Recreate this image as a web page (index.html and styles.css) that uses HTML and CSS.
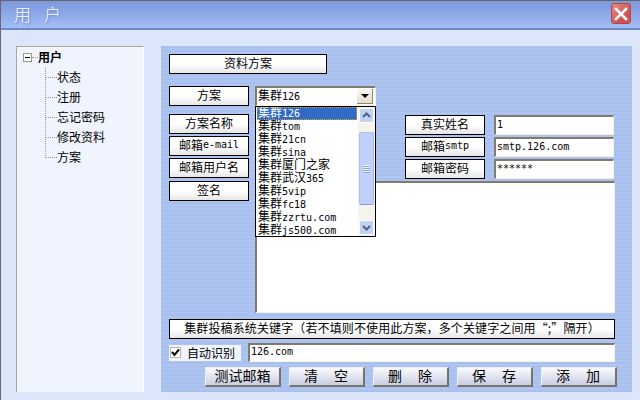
FILE: index.html
```html
<!DOCTYPE html>
<html lang="zh-CN">
<head>
<meta charset="utf-8">
<title>用户</title>
<link rel="stylesheet" href="styles.css">
</head>
<body>
<div class="window">
  <header class="titlebar">
    <h1 class="title">用户</h1>
    <button class="close" aria-label="关闭">
      <svg width="14" height="14" viewBox="0 0 14 14"><path d="M2 2 L12 12 M12 2 L2 12" stroke="#fff" stroke-width="2.6" stroke-linecap="square" fill="none"/></svg>
    </button>
  </header>
  <div class="client">
    <nav class="tree">
      <div class="root"><span class="toggle"></span><span class="tick-root"></span><b>用户</b></div>
      <ul class="branch">
        <li><span class="tick"></span>状态</li>
        <li><span class="tick"></span>注册</li>
        <li><span class="tick"></span>忘记密码</li>
        <li><span class="tick"></span>修改资料</li>
        <li><span class="tick"></span>方案</li>
      </ul>
    </nav>
    <main class="panel">
      <div class="btn btn-head">资料方案</div>
      <div class="form">
        <div class="labels">
          <div class="btn btn-label">方案</div>
          <div class="btn btn-label gap-first">方案名称</div>
          <div class="btn btn-label">邮箱<span class="en">e-mail</span></div>
          <div class="btn btn-label">邮箱用户名</div>
          <div class="btn btn-label gap-last">签名</div>
        </div>
        <div class="fields">
          <div class="select"><span class="select-text">集群<span class="en">126</span></span><span class="select-arrow"></span></div>
          <div class="list">
            <div class="items">
              <div class="item selected">集群<span class="en">126</span></div>
              <div class="item">集群<span class="en">tom</span></div>
              <div class="item">集群<span class="en">21cn</span></div>
              <div class="item">集群<span class="en">sina</span></div>
              <div class="item">集群厦门之家</div>
              <div class="item">集群武汉<span class="en">365</span></div>
              <div class="item">集群<span class="en">5vip</span></div>
              <div class="item">集群<span class="en">fc18</span></div>
              <div class="item">集群<span class="en">zzrtu.com</span></div>
              <div class="item">集群<span class="en">js500.com</span></div>
            </div>
            <div class="scrollbar">
              <span class="sb-btn"><svg width="13" height="13" viewBox="0 0 13 13"><path d="M3 8 L6.5 4.5 L10 8" stroke="#4d6185" stroke-width="2" fill="none"/></svg></span>
              <span class="sb-thumb"><span class="grip"></span></span>
              <span class="sb-btn"><svg width="13" height="13" viewBox="0 0 13 13"><path d="M3 5 L6.5 8.5 L10 5" stroke="#4d6185" stroke-width="2" fill="none"/></svg></span>
            </div>
          </div>
          <div class="right-group">
            <div class="pair"><div class="btn btn-label">真实姓名</div><input class="input input-short" value="1"></div>
            <div class="pair"><div class="btn btn-label">邮箱<span class="en">smtp</span></div><input class="input input-short" value="smtp.126.com"></div>
            <div class="pair"><div class="btn btn-label">邮箱密码</div><input class="input input-short" value="******"></div>
          </div>
          <textarea class="memo"></textarea>
        </div>
      </div>
      <div class="btn btn-long">集群投稿系统关键字（若不填则不使用此方案，多个关键字之间用“;”隔开）</div>
      <div class="auto-row">
        <label class="auto"><span class="check"><svg width="9" height="9" viewBox="0 0 9 9"><path d="M1 4 L3.5 7 L8 1.5" stroke="#000" stroke-width="2" fill="none"/></svg></span>自动识别</label>
        <input class="input input-key" value="126.com">
      </div>
      <div class="actions">
        <button class="action">测试邮箱</button>
        <button class="action spaced">清　空</button>
        <button class="action spaced">删　除</button>
        <button class="action spaced">保　存</button>
        <button class="action spaced">添　加</button>
      </div>
    </main>
  </div>
</div>
</body>
</html>
```
FILE: styles.css
```css
* { box-sizing: border-box; }
html, body { margin: 0; padding: 0; }
body {
  width: 640px;
  height: 400px;
  overflow: hidden;
  font-family: "Noto Sans CJK SC", "Liberation Sans", sans-serif;
  font-size: 12px;
  line-height: 13px;
  color: #000;
}
.en { font-family: "DejaVu Sans Mono", monospace; font-size: 10px; }

.window {
  width: 640px;
  height: 400px;
  display: flex;
  flex-direction: column;
  background: #dce6fb;
  border-left: 1px solid #6a6a6a;
}
.titlebar {
  height: 30px;
  flex: none;
  display: flex;
  align-items: center;
  justify-content: space-between;
  padding: 0 9px 2px 13px;
  border-top: 1px solid #666;
  border-bottom: 2px solid #7089c6;
  background: linear-gradient(#7c98dc, #a2bdf6);
}
.title {
  margin: 0;
  font-size: 17px;
  line-height: 20px;
  font-weight: 300;
  letter-spacing: 13px;
  color: #fff;
  text-shadow: 1px 1px 2px #5f7cc0;
}
.close {
  width: 20px;
  height: 21px;
  padding: 0;
  display: flex;
  align-items: center;
  justify-content: center;
  border: 1px solid #a84848;
  border-radius: 3px;
  background: linear-gradient(135deg, #e88c80, #d05050 70%);
}

.client {
  flex: 1;
  display: flex;
  gap: 17px;
  padding: 16px 7px 8px 15px;
  min-height: 0;
}
.tree {
  width: 128px;
  padding: 3px 0 0 6px;
  background: #f0f4fe;
  border-top: 1px solid #aca899;
  border-left: 1px solid #aca899;
  border-right: 1px solid #fff;
}
.root { display: flex; align-items: center; height: 14px; }
.root b { font-weight: 700; padding-bottom: 2px; }
.toggle {
  width: 9px;
  height: 9px;
  border: 1px solid #9a9a88;
  background: linear-gradient(#000, #000) center / 5px 1px no-repeat #fff;
}
.tick-root { width: 6px; height: 0; margin: 0; border-bottom: 1px dotted #999; }
.branch {
  list-style: none;
  margin: 0 0 0 22px;
  padding: 3px 0 0;
}
.branch li {
  height: 20px;
  padding-bottom: 2px;
  display: flex;
  align-items: center;
  background: repeating-linear-gradient(#999 0 1px, transparent 1px 2px) left top / 1px 100% no-repeat;
}
.branch li:last-child { background-size: 1px 50%; }
.tick { width: 12px; height: 0; margin-top: 2px; border-bottom: 1px dotted #999; }

.panel {
  width: 471px;
  padding: 8px 0 0 8px;
  background: repeating-linear-gradient(#a9c0ef 0 2px, #aec5f1 2px 4px);
  display: flex;
  flex-direction: column;
  min-height: 0;
}
.btn {
  height: 20px;
  padding-bottom: 3px;
  display: flex;
  align-items: center;
  justify-content: center;
  border: 1px solid #000;
  background: linear-gradient(#fff 50%, #e6e6e6);
  white-space: nowrap;
}
.btn-head { width: 158px; flex: none; }
.btn-label { width: 80px; flex: none; }

.form { display: flex; gap: 6px; margin-top: 12px; flex: none; position: relative; }
.labels { display: flex; flex-direction: column; gap: 2px; }
.gap-first { margin-top: 6px; }
.gap-last { margin-top: 1px; }

.fields { width: 360px; display: flex; flex-direction: column; position: relative; }
.select {
  width: 121px;
  height: 20px;
  flex: none;
  display: flex;
  align-items: center;
  justify-content: space-between;
  padding: 0 2px 0 1px;
  background: #fff;
  border-top: 2px solid #807b6c;
  border-left: 2px solid #807b6c;
  border-right: 1px solid #f5f3e6;
  border-bottom: 1px solid #f5f3e6;
}
.select-text { padding-bottom: 3px; }
.select-arrow {
  width: 16px;
  height: 15px;
  background: linear-gradient(#f7f6ee, #e4e1cd);
  border-right: 1px solid #8b8775;
  border-bottom: 1px solid #8b8775;
  position: relative;
}
.select-arrow::after {
  content: "";
  position: absolute;
  left: 4px;
  top: 5px;
  border: 4px solid transparent;
  border-top: 4px solid #000;
  border-bottom: 0;
}
.list {
  position: absolute;
  z-index: 2;
  left: 0;
  top: 20px;
  width: 121px;
  height: 131px;
  display: flex;
  background: #fff;
  border: 1px solid #000;
}
.items { flex: 1; padding: 0 0 0 1px; overflow: hidden; }
.item { height: 13px; padding-left: 1px; line-height: 10px; white-space: nowrap; }
.selected {
  color: #fff;
  background: #316ac5;
  outline: 1px dotted #c9a33c;
  outline-offset: -1px;
  margin-right: 1px;
}
.scrollbar {
  width: 17px;
  flex: none;
  display: flex;
  flex-direction: column;
  align-items: center;
  background: #f4f3ec;
  padding: 1px 1px 1px 0;
}
.sb-btn {
  width: 15px;
  height: 15px;
  flex: none;
  display: flex;
  align-items: center;
  justify-content: center;
  border: 1px solid #fff;
  border-radius: 2px;
  background: #c2d1f8;
}
.sb-thumb {
  width: 15px;
  height: 75px;
  margin: 9px 0 15px;
  display: flex;
  align-items: center;
  justify-content: center;
  border-radius: 2px;
  border: 1px solid #a8bdf0;
  border-bottom: 1px solid #7c9be0;
  background: #c0d0fa;
}
.grip {
  width: 7px;
  height: 8px;
  background: repeating-linear-gradient(#eef2fe 0 1px, #8fa8e0 1px 2px);
}

.right-group {
  margin: 9px 0 0 150px;
  display: flex;
  flex-direction: column;
  gap: 2px;
}
.pair { display: flex; gap: 9px; }
.input {
  height: 20px;
  padding: 0 1px 3px;
  font-family: "DejaVu Sans Mono", monospace;
  font-size: 10px;
  color: #000;
  background: #fff;
  border-top: 2px solid #807b6c;
  border-left: 2px solid #807b6c;
  border-right: 1px solid #f5f3e6;
  border-bottom: 1px solid #f5f3e6;
  border-radius: 0;
  outline: 0;
}
.input-short { width: 120px; }
.memo {
  width: 360px;
  height: 132px;
  margin: 2px 0 0;
  display: block;
  resize: none;
  overflow: hidden;
  background: #fff;
  border-top: 2px solid #807b6c;
  border-left: 2px solid #807b6c;
  border-right: 1px solid #f5f3e6;
  border-bottom: 1px solid #f5f3e6;
  border-radius: 0;
}

.btn-long { width: 446px; flex: none; margin-top: 6px; letter-spacing: 0.12px; }
.auto-row { display: flex; align-items: center; gap: 7px; margin-top: 4px; height: 19px; width: 446px; }
.auto {
  width: 72px;
  height: 16px;
  flex: none;
  display: flex;
  align-items: center;
  gap: 6px;
  background: #f0f4fe;
  white-space: nowrap;
  padding-left: 1px;
}
.check {
  width: 11px;
  height: 11px;
  display: flex;
  align-items: center;
  justify-content: center;
  background: #fff;
  border: 1px solid #b8b5a5;
}
.input-key { width: 367px; height: 19px; }
.actions { display: flex; gap: 8px; margin: 5px 0 0 36px; width: 412px; }
.action {
  width: 76px;
  height: 20px;
  padding: 0 0 3px;
  font: inherit;
  font-size: 14px;
  color: #000;
  background: linear-gradient(#fbfbfd, #c9cde2);
  border: 1px solid #f0f0f4;
  border-right: 2px solid #77756a;
  border-bottom: 2px solid #77756a;
  border-radius: 0;
}
.spaced { letter-spacing: 1px; }
```
